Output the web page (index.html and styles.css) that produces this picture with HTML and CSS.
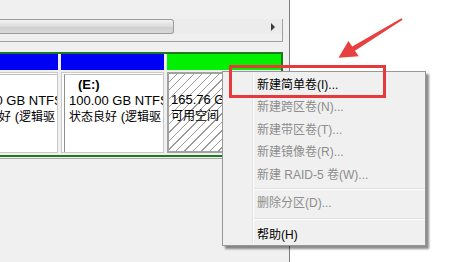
FILE: index.html
```html
<!DOCTYPE html>
<html lang="zh-CN">
<head>
<meta charset="utf-8">
<title>磁盘管理</title>
<link rel="stylesheet" href="styles.css">
</head>
<body>
<div class="page">
  <div class="window">
    <div class="hscroll">
      <div class="thumb"></div>
      <div class="track"><span class="arrow-r"></span></div>
    </div>
    <div class="disk">
      <div class="part p1">
        <div class="head blue"></div>
        <div class="box">
          <div class="inner">
            <div class="label">&nbsp;</div>
            <div class="line">100.00 GB NTFS</div>
            <div class="line"><span class="cjk">状态良好</span> (<span class="cjk">逻辑驱</span></div>
          </div>
        </div>
      </div>
      <div class="part p2">
        <div class="head blue"></div>
        <div class="box">
          <div class="inner">
            <div class="label">(E:)</div>
            <div class="line">100.00 GB NTFS</div>
            <div class="line"><span class="cjk">状态良好</span> (<span class="cjk">逻辑驱</span></div>
          </div>
        </div>
      </div>
      <div class="part p3">
        <div class="head green"></div>
        <div class="box free">
          <div class="inner">
            <div class="label">&nbsp;</div>
            <div class="line">165.76 G</div>
            <div class="line"><span class="cjk">可用空间</span></div>
          </div>
        </div>
      </div>
    </div>
    <div class="underline"></div>
  </div>

  <div class="menu">
    <div class="item on">新建简单卷(I)...</div>
    <div class="item">新建跨区卷(N)...</div>
    <div class="item">新建带区卷(T)...</div>
    <div class="item">新建镜像卷(R)...</div>
    <div class="item">新建 RAID-5 卷(W)...</div>
    <div class="sep"></div>
    <div class="item">删除分区(D)...</div>
    <div class="sep sep2"></div>
    <div class="item on">帮助(H)</div>
  </div>

  <div class="highlight"></div>
  <svg class="pointer" width="474" height="262" viewBox="0 0 474 262">
    <polygon points="401.4,18.2 352.3,46.5 348.4,40.9 338.5,57.8 358.8,56.2 354.9,50.7 402.6,19.8" fill="#e8403f"/>
  </svg>
</div>
</body>
</html>
```

FILE: styles.css
```css
* { box-sizing: border-box; }
html, body { margin: 0; padding: 0; }
body {
  background: #ffffff;
  font-family: "Liberation Sans", "Noto Sans CJK SC", sans-serif;
  font-size: 12px;
  color: #000;
}
.page {
  position: relative;
  width: 474px;
  height: 262px;
  overflow: hidden;
}
.window {
  width: 290px;
  height: 262px;
  background: #f0f0f0;
  border-right: 1px solid #7d7d7d;
  padding-top: 19px;
}
.hscroll {
  display: flex;
  height: 23px;
  margin-right: 6px;
  border-bottom: 1px solid #a0a0a0;
  border-right: 1px solid #a0a0a0;
  padding-bottom: 8px;
}
.thumb {
  width: 174px;
  height: 15px;
  border: 1px solid #9c9c9c;
  border-left: none;
  border-radius: 0 3px 3px 0;
  background: linear-gradient(#f2f2f2, #dcdcdc 50%, #cfcfcf 51%, #d8d8d8);
}
.track {
  flex: 1;
  height: 15px;
  background: #ececec;
  display: flex;
  justify-content: flex-end;
  align-items: center;
  padding-right: 7px;
}
.arrow-r {
  width: 0;
  height: 0;
  border-top: 4px solid transparent;
  border-bottom: 4px solid transparent;
  border-left: 4px solid #3c3c3c;
}
.disk {
  margin-top: 10px;
  width: 283px;
  height: 105px;
  border: 2px solid #1f7a1f;
  border-left: none;
  display: flex;
  gap: 3px;
  background: #f0f0f0;
}
.part {
  display: flex;
  flex-direction: column;
  overflow: hidden;
}
.p1 { width: 103px; margin-left: -45px; }
.p2 { width: 103px; }
.p3 { flex: 1; }
.head { height: 16px; margin-bottom: 2px; }
.blue { background: #0000f5; }
.green { background: #00f000; }
.box {
  flex: 1;
  margin-bottom: 2px;
  background: #fff;
  border: 1px solid #c9c9c9;
  padding: 1px 0 0 2px;
  overflow: hidden;
}
.inner {
  height: 100%;
  border-left: 1px solid #8e8e8e;
  border-top: 1px solid #c0c0c0;
  padding: 2px 0 0 4px;
  white-space: nowrap;
  line-height: 16px;
  font-size: 13px;
  overflow: hidden;
}
.cjk { font-size: 12px; }
.label { font-weight: bold; padding-left: 9px; }
.free {
  border: 2px solid #a2a2a2;
  border-right: none;
  padding: 0;
  background: repeating-linear-gradient(135deg, #ffffff 0 5px, #9a9a9a 5px 6px);
}
.free .inner { border: none; padding: 2px 0 0 2px; }
.free .line { background: transparent; }
.underline {
  width: 283px;
  margin-top: 1px;
  border-top: 1px solid #a8a8a8;
}
.menu {
  position: absolute;
  left: 222px;
  top: 71px;
  width: 204px;
  height: 175px;
  background: #f0f0f0;
  border: 1px solid #979797;
  padding-top: 1.5px;
  box-shadow: 3px 3px 2px rgba(0,0,0,0.45);
  font-size: 12px;
}
.menu::before {
  content: "";
  position: absolute;
  left: 29px;
  top: 1px;
  bottom: 1px;
  border-left: 1px solid #e2e3e3;
  border-right: 1px solid #ffffff;
}
.item {
  height: 22.5px;
  line-height: 22.5px;
  padding-left: 34px;
  color: #8d8d8d;
  position: relative;
}
.item.on { color: #000; }
.sep {
  height: 2px;
  margin: 2px 0 2px 30px;
  border-top: 1px solid #e0e0e0;
  border-bottom: 1px solid #ffffff;
}
.sep2 { margin: 3px 0 4px 30px; }
.highlight {
  position: absolute;
  left: 229px;
  top: 65px;
  width: 157px;
  height: 33px;
  border: 3px solid #e5393b;
}
.pointer {
  position: absolute;
  left: 0;
  top: 0;
  pointer-events: none;
}
```
